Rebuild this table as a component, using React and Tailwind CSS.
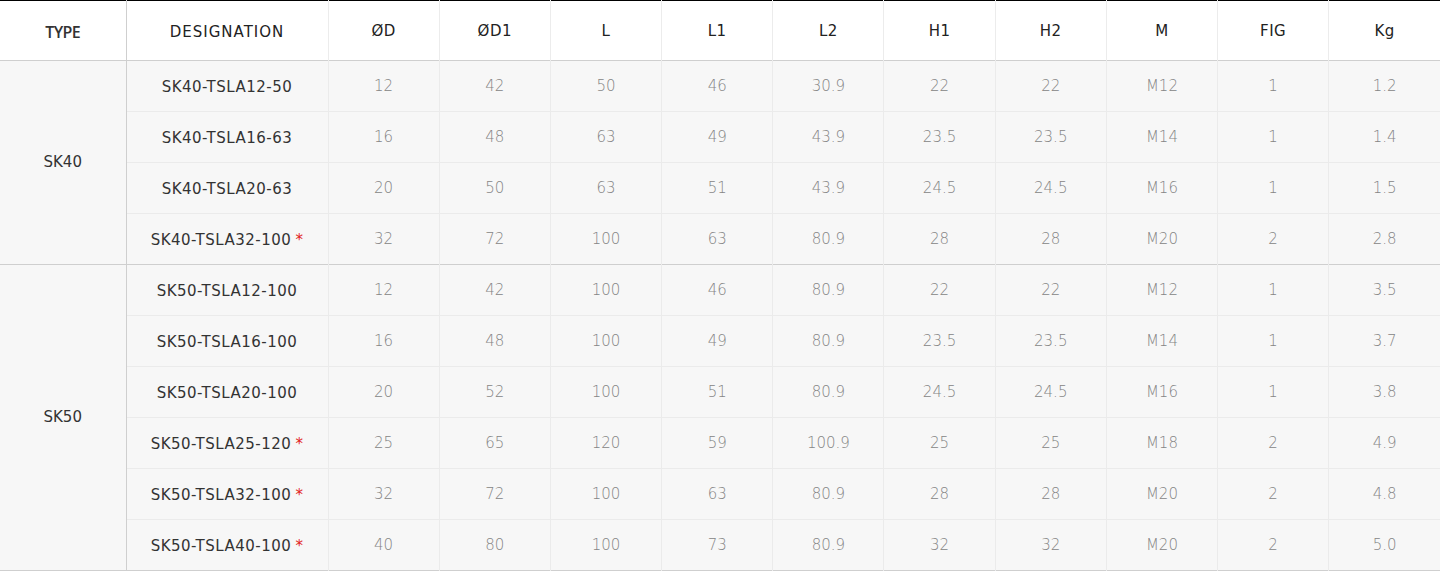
import React from 'react';

const headers = ['ØD', 'ØD1', 'L', 'L1', 'L2', 'H1', 'H2', 'M', 'FIG', 'Kg'];

const groups = [
  {
    type: 'SK40',
    rows: [
      ['SK40-TSLA12-50', false, '12', '42', '50', '46', '30.9', '22', '22', 'M12', '1', '1.2'],
      ['SK40-TSLA16-63', false, '16', '48', '63', '49', '43.9', '23.5', '23.5', 'M14', '1', '1.4'],
      ['SK40-TSLA20-63', false, '20', '50', '63', '51', '43.9', '24.5', '24.5', 'M16', '1', '1.5'],
      ['SK40-TSLA32-100', true, '32', '72', '100', '63', '80.9', '28', '28', 'M20', '2', '2.8'],
    ],
  },
  {
    type: 'SK50',
    rows: [
      ['SK50-TSLA12-100', false, '12', '42', '100', '46', '80.9', '22', '22', 'M12', '1', '3.5'],
      ['SK50-TSLA16-100', false, '16', '48', '100', '49', '80.9', '23.5', '23.5', 'M14', '1', '3.7'],
      ['SK50-TSLA20-100', false, '20', '52', '100', '51', '80.9', '24.5', '24.5', 'M16', '1', '3.8'],
      ['SK50-TSLA25-120', true, '25', '65', '120', '59', '100.9', '25', '25', 'M18', '2', '4.9'],
      ['SK50-TSLA32-100', true, '32', '72', '100', '63', '80.9', '28', '28', 'M20', '2', '4.8'],
      ['SK50-TSLA40-100', true, '40', '80', '100', '73', '80.9', '32', '32', 'M20', '2', '5.0'],
    ],
  },
];

export default function App() {
  return (
    <div className="bg-white" style={{ fontFamily: '"DejaVu Sans", sans-serif' }}>
      <table className="w-[1440px] table-fixed border-collapse border-t border-black">
        <colgroup>
          <col className="w-[126px]" />
          <col className="w-[202px]" />
          {headers.map((h) => (
            <col key={h} className="w-[111.2px]" />
          ))}
        </colgroup>
        <thead>
          <tr className="h-[60px] border-b border-[#cfcfcf]">
            <th className="border-r border-[#cfcfcf] font-['Open_Sans',sans-serif] text-[16px] font-semibold text-[#333] tracking-[-0.6px] pt-[2px]">TYPE</th>
            <th className="border-r border-[#ececec] text-[15px] font-normal text-[#222] tracking-[1px] pt-[4px]">DESIGNATION</th>
            {headers.map((h, i) => (
              <th
                key={h}
                className={`text-[15px] font-normal text-[#222] tracking-[0.5px] pt-[2px] ${i < headers.length - 1 ? 'border-r border-[#ececec]' : ''}`}
              >
                {h}
              </th>
            ))}
          </tr>
        </thead>
        <tbody className="bg-[#f7f7f7]">
          {groups.map((g) =>
            g.rows.map((r, ri) => (
              <tr
                key={r[0]}
                className={`h-[51px] ${ri === g.rows.length - 1 ? 'border-b border-[#cfcfcf]' : 'border-b border-[#ebebeb]'}`}
              >
                {ri === 0 && (
                  <td rowSpan={g.rows.length} className="border-r border-[#cfcfcf] text-center text-[15px] text-[#333]">
                    {g.type}
                  </td>
                )}
                <td className="border-r border-[#ebebeb] text-center text-[15px] text-[#333] tracking-[0.5px] pt-[3px]">
                  {r[0]}
                  {r[1] && <span className="text-[#e2231a] ml-1">*</span>}
                </td>
                {r.slice(2).map((v, i) => (
                  <td
                    key={i}
                    className={`text-center text-[15px] font-extralight text-[#858585] pt-[1px] ${i < 9 ? 'border-r border-[#ebebeb]' : ''}`}
                  >
                    {v}
                  </td>
                ))}
              </tr>
            ))
          )}
        </tbody>
      </table>
    </div>
  );
}
